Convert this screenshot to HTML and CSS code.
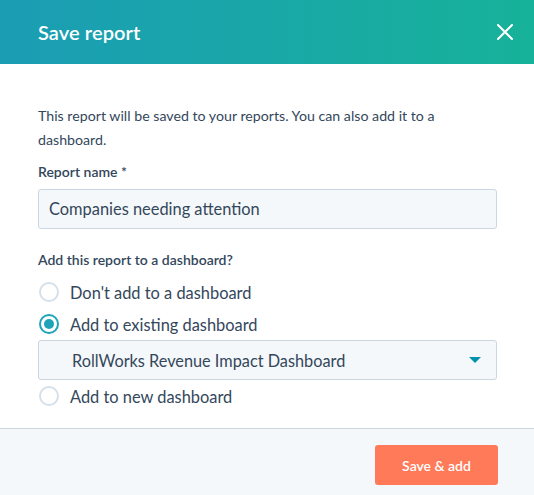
FILE: index.html
```html
<!DOCTYPE html>
<html lang="en">
<head>
<meta charset="utf-8">
<title>Save report</title>
<link rel="stylesheet" href="styles.css">
</head>
<body>
<div class="modal">
  <header class="modal-header">
    <h1 class="modal-title">Save report</h1>
    <button class="close-btn" aria-label="Close">
      <svg width="16" height="16" viewBox="0 0 16 16"><path d="M1 1 L15 15 M15 1 L1 15" stroke="#fff" stroke-width="2" stroke-linecap="square"/></svg>
    </button>
  </header>
  <main class="modal-body">
    <p class="intro">This report will be saved to your reports. You can also add it to a dashboard.</p>
    <label class="field-label">Report name *</label>
    <div class="text-input">Companies needing attention</div>
    <div class="field-label question">Add this report to a dashboard?</div>
    <div class="radio-row"><span class="radio"></span><span class="radio-label">Don't add to a dashboard</span></div>
    <div class="radio-row"><span class="radio checked"></span><span class="radio-label">Add to existing dashboard</span></div>
    <div class="select">
      <span class="select-text">RollWorks Revenue Impact Dashboard</span>
      <svg class="caret" width="12" height="6" viewBox="0 0 12 6"><path d="M0 0 H12 L6 6 Z" fill="#0091ae"/></svg>
    </div>
    <div class="radio-row"><span class="radio"></span><span class="radio-label">Add to new dashboard</span></div>
  </main>
  <footer class="modal-footer">
    <button class="primary-btn">Save &amp; add</button>
  </footer>
</div>
</body>
</html>
```

FILE: styles.css
```css
html, body {
  margin: 0;
  padding: 0;
  background: #fff;
}
body {
  font-family: Lato, "Noto Sans", sans-serif;
  color: #33475b;
  width: 534px;
  height: 495px;
  overflow: hidden;
}
.modal {
  display: flex;
  flex-direction: column;
  height: 495px;
}
.modal-header {
  height: 64px;
  flex: none;
  display: flex;
  align-items: center;
  justify-content: space-between;
  padding: 0 21px 0 38px;
  background: linear-gradient(to right, #1b9db4, #17b29a);
}
.modal-title {
  margin: 0;
  font-size: 20px;
  font-weight: 600;
  color: #fff;
  letter-spacing: 0.1px;
}
.close-btn {
  border: 0;
  background: none;
  padding: 0;
  width: 16px;
  height: 16px;
  display: flex;
}
.modal-body {
  flex: 1;
  padding: 40px 37px 0 38px;
  display: flex;
  flex-direction: column;
}
.intro {
  margin: 0;
  font-size: 14.2px;
  line-height: 24px;
}
.field-label {
  display: block;
  margin-top: 8px;
  font-size: 14px;
  line-height: 24px;
  font-weight: 600;
}
.text-input {
  margin-top: 5px;
  height: 38px;
  border: 1px solid #cbd6e2;
  border-radius: 3px;
  background: #f5f8fa;
  font-size: 16.4px;
  line-height: 38px;
  padding-left: 10px;
}
.question {
  margin-top: 19px;
}
.radio-row {
  height: 32px;
  display: flex;
  align-items: center;
}
.question + .radio-row {
  margin-top: 4px;
}
.radio {
  width: 16px;
  height: 16px;
  border: 2px solid #d6e0ea;
  border-radius: 50%;
  box-sizing: content-box;
  margin-left: 1px;
  position: relative;
  background: #fff;
}
.radio.checked {
  border-color: #1ea3b9;
}
.radio.checked::after {
  content: "";
  position: absolute;
  left: 3px;
  top: 3px;
  width: 10px;
  height: 10px;
  border-radius: 50%;
  background: #1ea3b9;
}
.radio-label {
  margin-left: 11px;
  font-size: 16.4px;
}
.select {
  height: 38px;
  border: 1px solid #cbd6e2;
  border-radius: 3px;
  background: #f5f8fa;
  display: flex;
  align-items: center;
  justify-content: space-between;
  padding: 0 15px 0 33px;
  font-size: 16.3px;
}
.modal-footer {
  flex: none;
  border-top: 1px solid #cbd6e2;
  background: #f5f8fa;
  display: flex;
  justify-content: flex-end;
  align-items: flex-start;
  padding: 16px 36px 0 0;
  box-sizing: border-box;
  height: 67px;
}
.primary-btn {
  width: 123px;
  height: 40px;
  border: 0;
  border-radius: 3px;
  background: #ff7a59;
  color: #fff;
  font-family: Lato, "Noto Sans", sans-serif;
  font-size: 14px;
  font-weight: 600;
}
```
